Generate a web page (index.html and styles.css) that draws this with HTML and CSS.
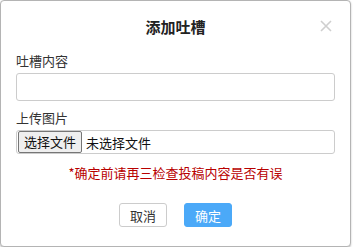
FILE: index.html
```html
<!DOCTYPE html>
<html lang="zh-CN">
<head>
    <meta charset="UTF-8">
    <meta name="viewport" content="width=device-width, initial-scale=1.0">
    <title>添加吐槽</title>
    <link rel="stylesheet" href="styles.css">
</head>
<body>
    <div class="dialog">
        <div class="dialog-header">
            <h3 class="dialog-title">添加吐槽</h3>
            <svg class="dialog-close" width="12" height="12" viewBox="0 0 12 12">
                <path d="M1 1 L11 11 M11 1 L1 11" stroke="#cfcfcf" stroke-width="1.6" fill="none"/>
            </svg>
        </div>
        <form class="dialog-body">
            <label class="field-label" for="content">吐槽内容</label>
            <textarea id="content" class="input-field"></textarea>

            <label class="field-label label-upload">上传图片</label>
            <div class="file-field">
                <span class="file-btn">选择文件</span>
                <span class="file-name">未选择文件</span>
            </div>

            <p class="tip">*确定前请再三检查投稿内容是否有误</p>

            <div class="dialog-footer">
                <button type="button" class="btn">取消</button>
                <button type="button" class="btn btn-primary">确定</button>
            </div>
        </form>
    </div>
</body>
</html>
```

FILE: styles.css
```css
body { margin: 0; background: #fff; font-family: "Noto Sans CJK SC", "Noto Sans", sans-serif; color: #333; font-size: 13px; }
.dialog { width: 351px; height: 247px; box-sizing: border-box; border: 1px solid #b4b4b4; border-radius: 4px; box-shadow: 0 1px 2px rgba(0,0,0,.25); background: #fff; }
.dialog-header { position: relative; padding-top: 16px; }
.dialog-title { margin: 0; text-align: center; font-size: 15px; line-height: 20px; font-weight: bold; color: #222; }
.dialog-close { position: absolute; left: 319px; top: 19px; }
.dialog-body { padding: 0 15px; }
.field-label { display: block; margin-top: 15px; line-height: 18px; color: #333; }
.label-upload { margin-top: 8px; }
.input-field { display: block; width: 100%; height: 28px; margin: 3px 0 0; box-sizing: border-box; border: 1px solid #ccc; border-radius: 3px; resize: none; }
.file-field { display: flex; align-items: center; height: 24px; margin-top: 3px; box-sizing: border-box; border: 1px solid #ccc; border-radius: 3px; padding: 0 1px; }
.file-btn { height: 22px; line-height: 20px; box-sizing: border-box; padding: 0 5px; background: #efefef; border: 1px solid #767676; border-radius: 2px; color: #111; }
.file-name { margin-left: 4px; color: #111; }
.tip { margin: 10px 0 0; text-align: center; line-height: 18px; color: #b80000; }
.dialog-footer { display: flex; justify-content: center; gap: 17px; margin-top: 21px; }
.btn { width: 48px; height: 24px; padding: 0; border: 1px solid #ccc; border-radius: 3px; background: #fff; color: #333; font-family: inherit; font-size: 13px; }
.btn-primary { background: #4ba9f8; border-color: #4ba9f8; color: #fff; }
```
